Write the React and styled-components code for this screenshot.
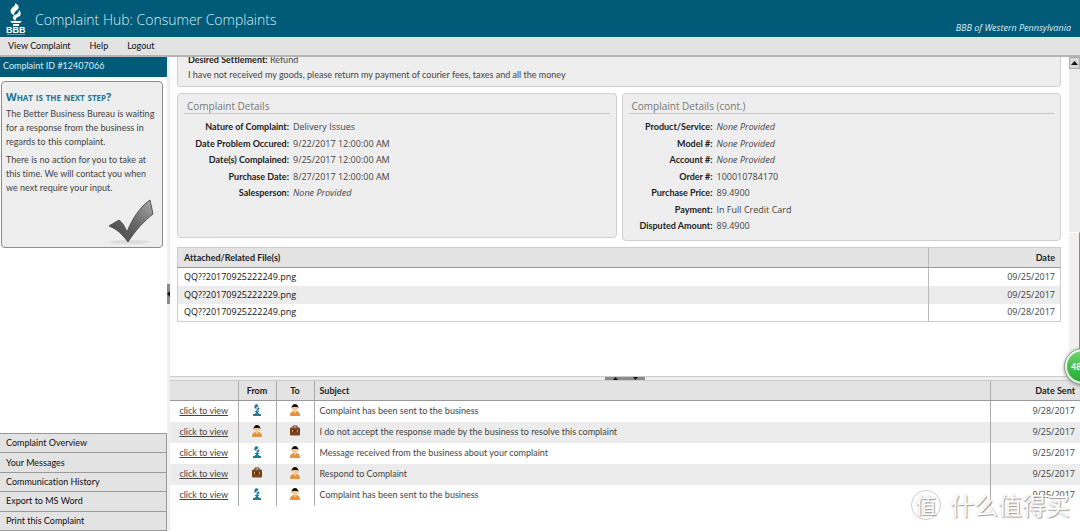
import React from "react";
import styled, { createGlobalStyle } from "styled-components";

const teal = "#005a78";
const bar = "#e3e3e3";
const openSans = `"Open Sans", "Noto Sans", sans-serif`;

const GlobalStyle = createGlobalStyle`
  * { box-sizing: border-box; }
  body { margin: 0; background: #fff; color: #444; font: 9px/12px Lato, "Open Sans", sans-serif; font-variant-ligatures: none; overflow: hidden; }
  button { font: inherit; color: inherit; background: none; border: 0; padding: 0; margin: 0; cursor: pointer; }
  h1, h2, p, dl, dd, dt { margin: 0; }
  table { border-collapse: collapse; width: 100%; }
  svg { display: block; flex: none; }
`;

const Shell = styled.div`
  position: relative;
  display: flex;
  flex-direction: column;
  height: 100vh;
  overflow: hidden;
`;

const Header = styled.header`
  display: flex;
  align-items: center;
  gap: 8px;
  flex: none;
  height: 37px;
  padding: 0 9px 0 5px;
  background: ${teal};
  color: #d8eef4;
`;

const Title = styled.h1`
  flex: 1;
  padding-top: 2px;
  font-family: ${openSans};
  font-size: 14px;
  line-height: 20px;
  font-weight: 300;
`;

const Office = styled.span`
  align-self: flex-end;
  padding-bottom: 3px;
  font-family: ${openSans};
  font-style: italic;
`;

const MenuBar = styled.nav`
  display: flex;
  gap: 19px;
  flex: none;
  height: 20px;
  padding: 0 8px;
  background: ${bar};
  border-bottom: 2px solid #b4b4b4;
  color: #111;
`;

const Body = styled.div`
  display: flex;
  flex: 1;
  min-height: 0;
`;

const Sidebar = styled.aside`
  display: flex;
  flex-direction: column;
  flex: none;
  width: 167px;
`;

const CaseId = styled.div`
  height: 20px;
  padding: 3px;
  background: ${teal};
  color: #d8eef4;
`;

const StepCard = styled.section`
  display: flex;
  flex-direction: column;
  gap: 4px;
  height: 167px;
  margin: 4px 4px 0 1px;
  padding: 9px 4px 4px 4px;
  background: #eee;
  border: 1px solid #8c8c8c;
  border-radius: 4px;
  line-height: 14px;
`;

const StepTitle = styled.h2`
  color: #1b7590;
  font-family: ${openSans};
  font-size: 11px;
  line-height: 12px;
  font-variant: small-caps;
  font-weight: 700;
`;

const CheckMark = styled.svg`
  align-self: flex-end;
  margin: auto 3px 2px 0;
`;

const SideMenu = styled.nav`
  display: flex;
  flex-direction: column;
  height: 98px;
  margin-top: auto;
  border-right: 1px solid #999;
  border-bottom: 1px solid #999;
  background: ${bar};
  color: #111;
`;

const SideItem = styled.button`
  flex: 1;
  padding-left: 6px;
  border-top: 1px solid #999;
  text-align: left;
`;

const VerticalSplit = styled.div`
  display: flex;
  align-items: center;
  flex: none;
  width: 3px;
  background: #efefef;
`;

const SplitHandle = styled.button`
  display: grid;
  place-items: center;
  width: ${(p) => (p.$wide ? 20 : 3)}px;
  height: ${(p) => (p.$wide ? 3 : 20)}px;
  background: #8b8b8b;
  color: #111;
`;

const Main = styled.main`
  display: flex;
  flex-direction: column;
  flex: 1;
  min-width: 0;
`;

const DetailPane = styled.div`
  display: flex;
  flex: 1;
  min-height: 0;
`;

const DetailContent = styled.div`
  display: flex;
  flex-direction: column;
  gap: 6px;
  flex: 1;
  min-width: 0;
  padding: 0 8px 0 7px;
`;

const Card = styled.section`
  background: #eee;
  border: 1px solid #cfcfcf;
  border-radius: 4px;
`;

const SettlementCard = styled(Card)`
  flex: none;
  height: 30px;
  padding: 0 10px;
  border-top: 0;
  border-radius: 0 0 4px 4px;
  overflow: hidden;
`;

const SettlementText = styled.div`
  display: flex;
  flex-direction: column;
  gap: 3px;
  margin-top: -3px;
`;

const Label = styled.strong`
  color: #222;
  font-weight: 700;
`;

const CardPair = styled.div`
  display: grid;
  grid-template-columns: 1fr 1fr;
  align-items: start;
  gap: 5px;
`;

const DetailCard = styled(Card)`
  height: ${(p) => (p.$tall ? 148 : 145)}px;
  padding: 5px 6px;
`;

const CardTitle = styled.h2`
  padding: 0 3px;
  border-bottom: 1px solid #c6c6c6;
  color: #777;
  font-family: ${openSans};
  font-size: 10px;
  line-height: 14px;
  font-weight: 400;
`;

const DetailList = styled.dl`
  padding-top: 5px;
`;

const DetailRow = styled.div`
  display: grid;
  grid-template-columns: ${(p) => p.$labels}px 1fr;
  column-gap: 4px;
  line-height: 16px;
  &:nth-child(even) { line-height: 17px; }
  dt { text-align: right; font-weight: 700; color: #222; }
  dd { font-family: ${openSans}; font-style: ${(p) => (p.$empty ? "italic" : "normal")}; }
`;

const FileTable = styled.table`
  border: 1px solid #ccc;
  th { height: 20px; padding: 0 5px 0 6px; background: ${bar}; border-bottom: 1px solid #999; color: #222; font-weight: 700; text-align: left; }
  td { height: 18px; padding: 0 5px 0 6px; font-family: ${openSans}; }
  tbody tr:nth-child(even) { background: #ececec; }
  th:last-child, td:last-child { width: 132px; border-left: 1px solid #bbb; text-align: right; }
`;

const FileLink = styled.a`
  color: #111;
  text-decoration: none;
`;

const ScrollTrack = styled.div`
  display: flex;
  flex-direction: column;
  flex: none;
  width: 11px;
  background: #ececec;
`;

const ScrollButton = styled.button`
  display: grid;
  place-items: center;
  height: 12px;
  background: #d8d8d8;
  border: 1px solid #aaa;
  color: #111;
`;

const ScrollThumb = styled.div`
  height: 45%;
  margin-top: auto;
  background: #f1f1ef;
  border-top: 1px solid #fff;
  border-right: 1px solid #8a8a80;
`;

const HorizontalSplit = styled.div`
  display: flex;
  justify-content: center;
  flex: none;
  height: 4px;
  background: #efefef;
  border-top: 1px solid #ccc;
`;

const MessagePane = styled.div`
  flex: none;
  height: 151px;
`;

const MessageTable = styled.table`
  table-layout: fixed;
  th { height: 20px; padding: 0 5px; background: ${bar}; border-top: 1px solid #ccc; border-bottom: 1px solid #999; color: #222; font-weight: 700; text-align: left; }
  td { height: 21px; padding: 0 5px; }
  tbody tr:nth-child(even) { background: #ececec; }
  th + th, td + td { border-left: 1px solid #aaa; }
  th:first-child, td:first-child { width: 68px; text-align: center; }
  th:nth-child(2), th:nth-child(3) { width: 38px; text-align: center; }
  th:last-child, td:last-child { width: 90px; text-align: right; }
  td:last-child { font-family: ${openSans}; }
  td svg { margin: -3px auto 0; }
`;

const ViewLink = styled.a`
  color: #444;
`;

const FloatBadge = styled.div`
  position: absolute;
  top: 349px;
  right: -20px;
  width: 35px;
  height: 35px;
  padding-left: 4px;
  border: 2px solid #e8f5e8;
  border-radius: 50%;
  outline: 1px solid #8aa88a;
  background: linear-gradient(#6fd56a, #27a836);
  box-shadow: 0 1px 4px #666;
  color: #fff;
  font-weight: 700;
  line-height: 31px;
`;

const Watermark = styled.div`
  position: absolute;
  right: 10px;
  bottom: 10px;
  display: flex;
  align-items: center;
  gap: 9px;
  color: #fff;
  font: 24px/32px "Noto Sans CJK SC", sans-serif;
  text-shadow: 1px 1px 1px #999, 0 0 1px #bbb;
`;

const WatermarkSeal = styled.span`
  width: 30px;
  height: 30px;
  border: 1px solid #ccc;
  border-radius: 50%;
  font-size: 21px;
  line-height: 27px;
  text-align: center;
`;

const Logo = () => (
  <svg width="22" height="34" viewBox="0 0 22 34" role="img" aria-label="BBB" fill="#fff">
    <path d="M10 1c4 2 5 5 2 7-2 2-4 3-2 6-4-2-6-5-3-8 2-2 4-3 3-5z" />
    <path d="M14 8c3 3 2 6-1 7-2 1-3 2-2 4-4-2-4-4-1-6 2-1 4-2 4-5z" />
    <path d="M5 19h12l-2 2H7z M8 22h6v2H8z" />
    <text x="1" y="31" fontSize="9" fontWeight="700" fontFamily="Liberation Sans, sans-serif">BBB</text>
    <path d="M2 32h18v1H2z" opacity=".4" />
  </svg>
);

const Torch = () => (
  <svg width="10" height="12" viewBox="0 0 10 12" fill="#26799a">
    <path d="M4 0c3 1 3 2 1 3-1 1-1 1 0 2-4-1-3-3-1-5z M6 3c3 2 1 3-1 4-2-1 1-2 1-4z M3 7h4v1H3z M3 9h4v1H3z M1 10h8v2H1z" />
    <path d="M4 7h2v4H4z" />
  </svg>
);

const Person = () => (
  <svg width="12" height="12" viewBox="0 0 12 12">
    <path d="M1 12c0-4 2-5 5-5s5 1 5 5z" fill="#e7913b" />
    <circle cx="6" cy="4" r="3" fill="#f6c995" />
    <path d="M2.500 4.500C2.500 1.500 4 0 6 0s3.500 1.500 3.500 4.500L8.500 3h-5z" fill="#17120f" />
    <path d="M4.500 7.500 6 9l1.500-1.500z" fill="#fff1d8" />
  </svg>
);

const Briefcase = () => (
  <svg width="12" height="12" viewBox="0 0 12 12">
    <path d="M4 3V1h4v2" fill="none" stroke="#5d3216" />
    <rect x="1" y="2.500" width="10" height="8" rx="1" fill="#7c4522" />
    <path d="M1 6h10" stroke="#56300f" />
    <path d="M3 5h1v2H3zM8 5h1v2H8z" fill="#d7a25f" />
  </svg>
);

const Arrow = ({ d, width = 7, height = 4 }) => (
  <svg width={width} height={height} viewBox={`0 0 ${width} ${height}`} fill="currentColor"><path d={d} /></svg>
);

const icons = { bbb: Torch, person: Person, business: Briefcase };

const leftDetails = [
  ["Nature of Complaint:", "Delivery Issues"],
  ["Date Problem Occured:", "9/22/2017 12:00:00 AM"],
  ["Date(s) Complained:", "9/25/2017 12:00:00 AM"],
  ["Purchase Date:", "8/27/2017 12:00:00 AM"],
  ["Salesperson:", null],
];

const rightDetails = [
  ["Product/Service:", null],
  ["Model #:", null],
  ["Account #:", null],
  ["Order #:", "100010784170"],
  ["Purchase Price:", "89.4900"],
  ["Payment:", "In Full Credit Card"],
  ["Disputed Amount:", "89.4900"],
];

const files = [
  ["QQ??20170925222249.png", "09/25/2017"],
  ["QQ??20170925222229.png", "09/25/2017"],
  ["QQ??20170925222249.png", "09/28/2017"],
];

const messages = [
  ["bbb", "person", "Complaint has been sent to the business", "9/28/2017"],
  ["person", "business", "I do not accept the response made by the business to resolve this complaint", "9/25/2017"],
  ["bbb", "person", "Message received from the business about your complaint", "9/25/2017"],
  ["business", "person", "Respond to Complaint", "9/25/2017"],
  ["bbb", "person", "Complaint has been sent to the business", "9/25/2017"],
];

const sideItems = ["Complaint Overview", "Your Messages", "Communication History", "Export to MS Word", "Print this Complaint"];

const Details = ({ title, rows, labels, tall }) => (
  <DetailCard $tall={tall}>
    <CardTitle>{title}</CardTitle>
    <DetailList>
      {rows.map(([name, value]) => (
        <DetailRow key={name} $labels={labels} $empty={value === null}>
          <dt>{name}</dt>
          <dd>{value ?? "None Provided"}</dd>
        </DetailRow>
      ))}
    </DetailList>
  </DetailCard>
);

export default function App() {
  return (
    <Shell>
      <GlobalStyle />
      <Header>
        <Logo />
        <Title>Complaint Hub: Consumer Complaints</Title>
        <Office>BBB of Western Pennsylvania</Office>
      </Header>
      <MenuBar>
        <button>View Complaint</button>
        <button>Help</button>
        <button>Logout</button>
      </MenuBar>
      <Body>
        <Sidebar>
          <CaseId>Complaint ID #12407066</CaseId>
          <StepCard>
            <StepTitle>What is the next step?</StepTitle>
            <p>The Better Business Bureau is waiting<br />for a response from the business in<br />regards to this complaint.</p>
            <p>There is no action for you to take at<br />this time. We will contact you when<br />we next require your input.</p>
            <CheckMark width="48" height="46" viewBox="0 0 48 46">
              <defs>
                <linearGradient id="check" x1="0" y1="1" x2="1" y2="0">
                  <stop offset="0" stopColor="#444" />
                  <stop offset="0.5" stopColor="#666" />
                  <stop offset="1" stopColor="#aaa" />
                </linearGradient>
              </defs>
              <ellipse cx="22" cy="43" rx="20" ry="2" fill="#ddd" />
              <path d="M2 27 12 21c4 3 6 7 8 12C25 20 33 8 43 1l3 14C37 22 28 32 21 43 16 36 10 30 2 27z" fill="url(#check)" stroke="#555" />
            </CheckMark>
          </StepCard>
          <SideMenu>
            {sideItems.map((item) => <SideItem key={item}>{item}</SideItem>)}
          </SideMenu>
        </Sidebar>
        <VerticalSplit>
          <SplitHandle aria-label="Collapse sidebar"><Arrow width={3} height={6} d="M3 0v6L0 3z" /></SplitHandle>
        </VerticalSplit>
        <Main>
          <DetailPane>
            <DetailContent>
              <SettlementCard>
                <SettlementText>
                  <p><Label>Desired Settlement:</Label> Refund</p>
                  <p>I have not received my goods, please return my payment of courier fees, taxes and all the money</p>
                </SettlementText>
              </SettlementCard>
              <CardPair>
                <Details title="Complaint Details" rows={leftDetails} labels={105} />
                <Details title="Complaint Details (cont.)" rows={rightDetails} labels={84} tall />
              </CardPair>
              <FileTable>
                <thead><tr><th>Attached/Related File(s)</th><th>Date</th></tr></thead>
                <tbody>
                  {files.map(([name, date], i) => (
                    <tr key={i}><td><FileLink href="#file">{name}</FileLink></td><td>{date}</td></tr>
                  ))}
                </tbody>
              </FileTable>
            </DetailContent>
            <ScrollTrack>
              <ScrollButton aria-label="Scroll up"><Arrow d="M0 4h7L3.500 0z" /></ScrollButton>
              <ScrollThumb />
            </ScrollTrack>
          </DetailPane>
          <HorizontalSplit>
            <SplitHandle $wide aria-label="Collapse details"><Arrow height={3} width={5} d="M0 3h5L2.500 0z" /></SplitHandle>
            <SplitHandle $wide aria-label="Collapse messages"><Arrow height={3} width={5} d="M0 0h5L2.500 3z" /></SplitHandle>
          </HorizontalSplit>
          <MessagePane>
            <MessageTable>
              <thead><tr><th /><th>From</th><th>To</th><th>Subject</th><th>Date Sent</th></tr></thead>
              <tbody>
                {messages.map(([from, to, subject, date], i) => {
                  const From = icons[from];
                  const To = icons[to];
                  return (
                    <tr key={i}>
                      <td><ViewLink href="#view">click to view</ViewLink></td>
                      <td><From /></td>
                      <td><To /></td>
                      <td>{subject}</td>
                      <td>{date}</td>
                    </tr>
                  );
                })}
              </tbody>
            </MessageTable>
          </MessagePane>
        </Main>
      </Body>
      <FloatBadge>48</FloatBadge>
      <Watermark>
        <WatermarkSeal>值</WatermarkSeal>
        <span>什么值得买</span>
      </Watermark>
    </Shell>
  );
}
